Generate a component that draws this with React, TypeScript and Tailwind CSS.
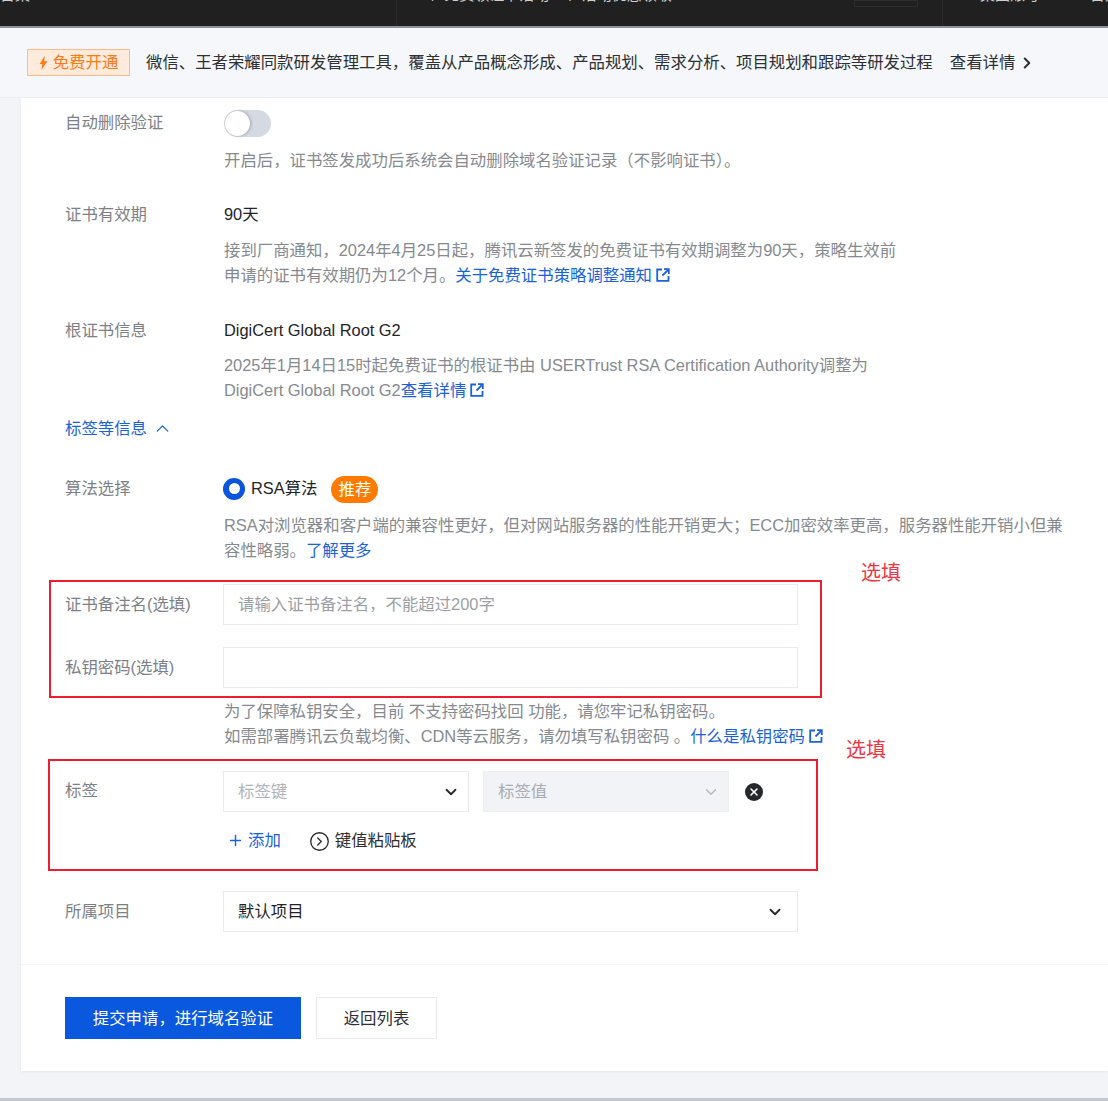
import type { ReactNode } from "react";
import { ChevronDown, ChevronRight, ChevronUp, CircleChevronRight, Plus, X } from "lucide-react";

function ExternalIcon() {
  return (
    <svg viewBox="0 0 14 14" className="ml-[4px] inline-block h-[14px] w-[14px] align-[-1px]" fill="none" stroke="currentColor" strokeWidth="1.8">
      <path d="M6 1.5H1.2v11.3h11.3V8" />
      <path d="M8 1.2h4.8V6M12.6 1.4 6.5 7.5" />
    </svg>
  );
}

function Field({ label, children, className }: { label: string; children: ReactNode; className: string }) {
  return (
    <div className={`flex ${className}`}>
      <div className="w-[158px] shrink-0 leading-[25px] text-[#7d8187]">{label}</div>
      <div className="min-w-0 flex-1">{children}</div>
    </div>
  );
}

function Help({ children, className }: { children: ReactNode; className: string }) {
  return <p className={`whitespace-nowrap pl-px leading-[25px] text-[#868a90] ${className}`}>{children}</p>;
}

export default function App() {
  return (
    <div className="relative h-[1101px] w-[1108px] overflow-hidden bg-[#f2f4f8] text-[16.4px] font-['Liberation_Sans','Noto_Sans_CJK_SC',sans-serif]">
      {/* top bar, mostly scrolled out of the shot */}
      <header className="flex h-[28px] border-b-2 border-[#8e9095] bg-[#202020] text-[15px] leading-[16px] text-[#cfcfcf]">
        <div className="w-[396px] shrink-0 whitespace-nowrap">
          <div className="mt-[-13px]">备案</div>
        </div>
        <div className="flex w-[547px] shrink-0 justify-between border-x border-[#2c2c2c] pl-[28px] pr-[24px]">
          <div className="mt-[-13px] whitespace-nowrap">个 免费领证书活动 · 个 活动优惠领取</div>
          <div className="h-[7px] w-[64px] border border-[#2c2c2c]" />
        </div>
        <div className="flex flex-1 justify-between pl-[37px]">
          <div className="mt-[-13px] whitespace-nowrap">集团账号</div>
          <div className="mt-[-13px] w-[18px] overflow-hidden whitespace-nowrap">备案</div>
        </div>
      </header>

      <div className="flex h-[70px] items-center whitespace-nowrap border-b border-[#eceef2] bg-[#f5f7fa] pl-[27px] text-[#2e3033]">
        <span className="flex h-[27px] w-[103px] items-center justify-center border border-[#ffb987] bg-[#ffeadb] text-[#ff7a14]">
          <svg viewBox="0 0 10 16" className="mr-[5px] h-[14px] w-[9px]" fill="currentColor">
            <path d="M6.5 0 .5 9h3.2L2.6 16l6.9-10H5.8z" />
          </svg>
          免费开通
        </span>
        <span className="ml-[16px]">微信、王者荣耀同款研发管理工具，覆盖从产品概念形成、产品规划、需求分析、项目规划和跟踪等研发过程</span>
        <span className="ml-[17px]">查看详情</span>
        <ChevronRight size={18} strokeWidth={2.8} className="ml-[3px]" />
      </div>

      <main className="ml-[21px] h-[973px] bg-white pl-[44px] pt-[12px] text-[#222428] shadow-[0_1px_3px_rgba(0,0,0,0.06)]">
        <Field label="自动删除验证" className="">
          <div className="ml-px flex h-[27px] w-[47px] items-center rounded-full bg-[#d5d9e2] pl-[1px]">
            <div className="h-[25px] w-[25px] rounded-full bg-white shadow-[1px_0_3px_rgba(0,0,0,0.25)]" />
          </div>
          <Help className="mt-[11px]">开启后，证书签发成功后系统会自动删除域名验证记录（不影响证书）。</Help>
        </Field>

        <Field label="证书有效期" className="mt-[29px]">
          <div className="pl-px leading-[25px]">90天</div>
          <Help className="mt-[11px]">
            接到厂商通知，2024年4月25日起，腾讯云新签发的免费证书有效期调整为90天，策略生效前
            <br />
            申请的证书有效期仍为12个月。
            <span className="text-[#1a62dc]">
              关于免费证书策略调整通知
              <ExternalIcon />
            </span>
          </Help>
        </Field>

        <Field label="根证书信息" className="mt-[30px]">
          <div className="pl-px leading-[25px]">DigiCert Global Root G2</div>
          <Help className="mt-[10px]">
            2025年1月14日15时起免费证书的根证书由 USERTrust RSA Certification Authority调整为
            <br />
            DigiCert Global Root G2
            <span className="text-[#1a62dc]">
              查看详情
              <ExternalIcon />
            </span>
          </Help>
        </Field>

        <div className="mt-[13px] flex items-center leading-[25px] text-[#1a62dc]">
          标签等信息
          <ChevronUp size={21} strokeWidth={1.5} className="ml-[5px]" />
        </div>

        <Field label="算法选择" className="mt-[35px]">
          <div className="flex h-[25px] items-center">
            <span className="flex h-[22px] w-[22px] items-center justify-center rounded-full bg-[#0a55dc]">
              <span className="h-[11px] w-[11px] rounded-full bg-white" />
            </span>
            <span className="ml-[6px]">RSA算法</span>
            <span className="ml-[14px] mt-[2px] flex h-[27px] w-[47px] items-center justify-center rounded-full bg-[#ff7a00] text-white">推荐</span>
          </div>
          <Help className="mt-[12px]">
            RSA对浏览器和客户端的兼容性更好，但对网站服务器的性能开销更大；ECC加密效率更高，服务器性能开销小但兼
            <br />
            容性略弱。<span className="text-[#1a62dc]">了解更多</span>
          </Help>
        </Field>

        <Field label="证书备注名(选填)" className="mt-[21px] items-center">
          <input
            readOnly
            placeholder="请输入证书备注名，不能超过200字"
            className="block h-[41px] w-[575px] border border-[#e8ebf0] bg-white px-[14px] placeholder:text-[#9b9fa5]"
          />
        </Field>

        <Field label="私钥密码(选填)" className="mt-[22px] items-center">
          <input readOnly className="block h-[41px] w-[575px] border border-[#e8ebf0] bg-white px-[14px]" />
        </Field>

        <Help className="ml-[158px] mt-[11px]">
          为了保障私钥安全，目前 不支持密码找回 功能，请您牢记私钥密码。
          <br />
          如需部署腾讯云负载均衡、CDN等云服务，请勿填写私钥密码 。
          <span className="text-[#1a62dc]">
            什么是私钥密码
            <ExternalIcon />
          </span>
        </Help>

        <Field label="标签" className="mt-[22px] items-start pt-[7px]">
          <div className="mt-[-7px] flex items-center">
            <div className="flex h-[41px] w-[246px] items-center justify-between border border-[#e8ebf0] pl-[14px] pr-[8px] text-[#b0b4ba]">
              标签键
              <ChevronDown size={18} strokeWidth={2.4} className="text-[#26282c]" />
            </div>
            <div className="ml-[14px] flex h-[41px] w-[246px] items-center justify-between border border-[#eceef2] bg-[#f1f3f6] pl-[14px] pr-[8px] text-[#a8acb2]">
              标签值
              <ChevronDown size={18} strokeWidth={1.8} className="text-[#b3b7bd]" />
            </div>
            <span className="ml-[16px] flex h-[18px] w-[18px] items-center justify-center rounded-full bg-[#26282c] text-white">
              <X size={12} strokeWidth={3.2} />
            </span>
          </div>
          <div className="mt-[16px] flex h-[25px] items-center">
            <Plus size={17} strokeWidth={2} className="ml-[4px] text-[#1a62dc]" />
            <span className="ml-[4px] text-[#1a62dc]">添加</span>
            <CircleChevronRight size={21} strokeWidth={1.5} className="ml-[28px] mt-[2px] text-[#26282c]" />
            <span className="ml-[5px] text-[#2e3033]">键值粘贴板</span>
          </div>
        </Field>

        <Field label="所属项目" className="mt-[38px] items-center">
          <div className="flex h-[41px] w-[575px] items-center justify-between border border-[#e8ebf0] pl-[14px] pr-[13px]">
            默认项目
            <ChevronDown size={18} strokeWidth={2.4} className="text-[#26282c]" />
          </div>
        </Field>

        <div className="ml-[-44px] mt-[32px] border-t border-[#f6f7f9]" />

        <div className="mt-[32px] flex">
          <button type="button" className="h-[42px] w-[236px] bg-[#0a58dd] text-white">提交申请，进行域名验证</button>
          <button type="button" className="ml-[15px] h-[42px] w-[121px] border border-[#e8ebf0] bg-white text-[#2e3033]">返回列表</button>
        </div>
      </main>

      <div className="absolute inset-x-0 bottom-0 h-[3px] bg-[#c4c7cd]" />

      {/* red hand-drawn annotations on top of the form */}
      <div className="absolute left-[49px] top-[580px] h-[118px] w-[773px] border-2 border-[#ee1c2e]" />
      <div className="absolute left-[48px] top-[759px] h-[112px] w-[770px] border-2 border-[#ee1c2e]" />
      <span className="absolute left-[861px] top-[560px] text-[20px] leading-[26px] text-[#f0353f]">选填</span>
      <span className="absolute left-[846px] top-[737px] text-[20px] leading-[26px] text-[#f0353f]">选填</span>
    </div>
  );
}
